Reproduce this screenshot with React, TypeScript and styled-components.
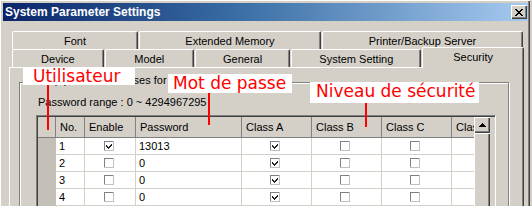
import React from 'react'
import styled, { createGlobalStyle } from 'styled-components'

const FACE = '#d4d0c8'
const SHADOW = '#808080'
const DARK = '#404040'
const GRID = '#d4d0c8'
const ROW_HEAD = '#c4c0b8'
const UI_FONT = '"Liberation Sans", Arial, sans-serif'
const NOTE_FONT = '"DejaVu Sans", Verdana, sans-serif'

const GlobalStyle = createGlobalStyle`
  html, body {
    margin: 0;
    padding: 0;
    background: ${FACE};
  }
  body {
    width: 532px;
    height: 206px;
    overflow: hidden;
    font-family: ${UI_FONT};
    font-size: 11px;
    color: #000;
  }
`

const Window = styled.div`
  position: relative;
  box-sizing: border-box;
  width: 530px;
  height: 206px;
  overflow: hidden;
  padding: 3px 2px 0 3px;
  background: ${FACE};
  box-shadow: inset 1px 1px 0 #fff, inset -1px 0 0 ${DARK},
    inset -2px 0 0 ${SHADOW};
`

const TitleBar = styled.div`
  display: flex;
  align-items: center;
  justify-content: space-between;
  height: 18px;
  padding: 0 1px 0 2px;
  background: linear-gradient(90deg, #0a246a 0%, #3a6ea5 45%, #a6caf0 100%);
`

const TitleText = styled.span`
  color: #fff;
  font-weight: bold;
  font-size: 12px;
  white-space: nowrap;
`

const CloseButton = styled.div`
  box-sizing: border-box;
  width: 16px;
  height: 14px;
  display: flex;
  align-items: center;
  justify-content: center;
  background: ${FACE};
  box-shadow: inset 1px 1px 0 #fff, inset -1px -1px 0 ${DARK},
    inset -2px -2px 0 ${SHADOW};
`

const Body = styled.div`
  padding: 10px 4px 0 6px;
`

const TabRow = styled.div`
  display: flex;
  align-items: flex-end;
  gap: 1px;
  height: 18px;
  padding-left: 3px;
`

const Tab = styled.div<{ $w: number; $active?: boolean }>`
  position: relative;
  z-index: ${(p) => (p.$active ? 2 : 1)};
  box-sizing: border-box;
  width: ${(p) => p.$w}px;
  height: ${(p) => (p.$active ? 21 : 18)}px;
  margin-bottom: ${(p) => (p.$active ? -1 : 0)}px;
  padding-bottom: ${(p) => (p.$active ? 3 : 0)}px;
  display: flex;
  align-items: center;
  justify-content: center;
  background: ${FACE};
  border-top: 1px solid #fff;
  border-left: 1px solid #fff;
  border-right: 1px solid ${DARK};
  box-shadow: inset -1px 0 0 ${SHADOW};
  border-radius: 2px 2px 0 0;
  white-space: nowrap;
`

const Panel = styled.div`
  box-sizing: border-box;
  height: 160px;
  padding: 14px 14px 0 9px;
  border-top: 1px solid #fff;
  border-left: 1px solid #fff;
  border-right: 1px solid ${DARK};
  box-shadow: inset -1px 0 0 ${SHADOW};
`

const GroupBox = styled.div`
  height: 150px;
  padding: 0 16px;
  border: 1px solid ${SHADOW};
  box-shadow: inset 1px 1px 0 #fff, 1px 1px 0 #fff;
`

const Caption = styled.div`
  width: fit-content;
  margin: -9px 0 0 -9px;
  padding: 0 2px;
  line-height: 13px;
  background: ${FACE};
  white-space: nowrap;
`

const RangeText = styled.div`
  margin: 9px 0 0 2px;
  line-height: 13px;
`

const TableFrame = styled.div`
  display: flex;
  width: 456px;
  height: 100px;
  margin-top: 6px;
  border-top: 1px solid ${SHADOW};
  border-left: 1px solid ${SHADOW};
  border-right: 1px solid #fff;
  box-shadow: inset 1px 1px 0 ${DARK}, inset -1px 0 0 ${FACE};
  padding: 1px 1px 0 1px;
`

const Grid = styled.div`
  display: grid;
  width: 436px;
  overflow: hidden;
  grid-template-columns: 18px 29px 51px 106px 70px 70px 70px 70px;
  grid-template-rows: 21px;
  grid-auto-rows: 17px;
  align-content: start;
`

const HeadCell = styled.div`
  box-sizing: border-box;
  display: flex;
  align-items: center;
  padding-left: 4px;
  background: ${FACE};
  border-right: 1px solid ${SHADOW};
  border-bottom: 1px solid ${SHADOW};
  white-space: nowrap;
  overflow: hidden;
`

const RowHead = styled.div`
  background: ${ROW_HEAD};
`

const Cell = styled.div<{ $center?: boolean }>`
  box-sizing: border-box;
  display: flex;
  align-items: center;
  justify-content: ${(p) => (p.$center ? 'center' : 'flex-start')};
  padding: ${(p) => (p.$center ? '0 3px 0 0' : '0 0 0 3px')};
  background: #fff;
  border-right: 1px solid ${GRID};
  border-bottom: 1px solid ${GRID};
`

const ScrollBar = styled.div`
  display: flex;
  flex-direction: column;
  width: 16px;
`

const raised = `
  box-sizing: border-box;
  background: ${FACE};
  box-shadow: inset 1px 1px 0 #fff, inset -1px -1px 0 ${DARK},
    inset -2px -2px 0 ${SHADOW};
`

const ScrollButton = styled.div`
  ${raised}
  height: 16px;
  display: flex;
  align-items: center;
  justify-content: center;
`

const ScrollThumb = styled.div`
  ${raised}
  flex: 1;
`

const Annotation = styled.div<{ $x: number; $y: number }>`
  position: absolute;
  left: ${(p) => p.$x}px;
  top: ${(p) => p.$y}px;
  z-index: 10;
  display: flex;
  flex-direction: column;
`

const NoteLabel = styled.div<{ $w: number; $h: number; $pad: number }>`
  box-sizing: border-box;
  width: ${(p) => p.$w}px;
  height: ${(p) => p.$h}px;
  padding-left: ${(p) => p.$pad}px;
  background: #fff;
  color: #ff0000;
  font-family: ${NOTE_FONT};
  font-size: 17px;
  line-height: 18px;
  white-space: nowrap;
  overflow: hidden;
`

const NotePointer = styled.div<{ $offset: number; $len: number }>`
  width: 2px;
  height: ${(p) => p.$len}px;
  margin-left: ${(p) => p.$offset}px;
  background: #ff0000;
`

const CheckBox = ({ checked }: { checked: boolean }) => (
  <svg width="10" height="10" viewBox="0 0 10 10" shapeRendering="crispEdges">
    <rect x="0" y="0" width="10" height="10" fill="#c0c0c0" />
    <rect x="0" y="0" width="9" height="9" fill="#808080" />
    <rect x="1" y="1" width="8" height="8" fill="#fff" />
    {checked && (
      <path
        d="M2 4h1v1h1v1h1V5h1V4h1V3h1v2H7v1H6v1H5v1H4V7H3V6H2z"
        fill="#202020"
      />
    )}
  </svg>
)

const rows = [
  { no: 1, enable: true, password: '13013', a: true, b: false, c: false },
  { no: 2, enable: false, password: '0', a: true, b: false, c: false },
  { no: 3, enable: false, password: '0', a: true, b: false, c: false },
  { no: 4, enable: false, password: '0', a: true, b: false, c: false },
]

const columns = ['', 'No.', 'Enable', 'Password', 'Class A', 'Class B', 'Class C', 'Class D']

export default function App() {
  return (
    <>
      <GlobalStyle />
      <Window>
        <TitleBar>
          <TitleText>System Parameter Settings</TitleText>
          <CloseButton>
            <svg width="8" height="7" viewBox="0 0 8 7" shapeRendering="crispEdges">
              <path
                d="M0 0h2v1h1v1h2V1h1V0h2v1H7v1H6v1H5v1h1v1h1v1h1v1H6V6H5V5H3v1H2v1H0V6h1V5h1V4h1V3H2V2H1V1H0z"
                fill="#000"
              />
            </svg>
          </CloseButton>
        </TitleBar>
        <Body>
          <TabRow>
            <Tab $w={126}>Font</Tab>
            <Tab $w={182}>Extended Memory</Tab>
            <Tab $w={201}>Printer/Backup Server</Tab>
          </TabRow>
          <TabRow>
            <Tab $w={92}>Device</Tab>
            <Tab $w={89}>Model</Tab>
            <Tab $w={96}>General</Tab>
            <Tab $w={130}>System Setting</Tab>
            <Tab $w={102} $active>
              Security
            </Tab>
          </TabRow>
          <Panel>
            <GroupBox>
              <Caption>Set up password classes for users</Caption>
              <RangeText>Password range : 0 ~ 4294967295</RangeText>
              <TableFrame>
                <Grid>
                  {columns.map((c, i) => (
                    <HeadCell key={i}>{c}</HeadCell>
                  ))}
                  {rows.map((r) => (
                    <React.Fragment key={r.no}>
                      <RowHead />
                      <Cell>{r.no}</Cell>
                      <Cell $center>
                        <CheckBox checked={r.enable} />
                      </Cell>
                      <Cell>{r.password}</Cell>
                      <Cell $center>
                        <CheckBox checked={r.a} />
                      </Cell>
                      <Cell $center>
                        <CheckBox checked={r.b} />
                      </Cell>
                      <Cell $center>
                        <CheckBox checked={r.c} />
                      </Cell>
                      <Cell $center />
                    </React.Fragment>
                  ))}
                </Grid>
                <ScrollBar>
                  <ScrollButton>
                    <svg width="7" height="4" viewBox="0 0 7 4" shapeRendering="crispEdges">
                      <path d="M3 0h1v1h1v1h1v1h1v1H0V3h1V2h1V1h1z" fill="#000" />
                    </svg>
                  </ScrollButton>
                  <ScrollThumb />
                </ScrollBar>
              </TableFrame>
            </GroupBox>
          </Panel>
        </Body>

        <Annotation $x={23} $y={67}>
          <NoteLabel $w={112} $h={18} $pad={10}>
            Utilisateur
          </NoteLabel>
          <NotePointer $offset={24} $len={45} />
        </Annotation>
        <Annotation $x={168} $y={74}>
          <NoteLabel $w={124} $h={19} $pad={5}>
            Mot de passe
          </NoteLabel>
          <NotePointer $offset={40} $len={32} />
        </Annotation>
        <Annotation $x={310} $y={82}>
          <NoteLabel $w={169} $h={21} $pad={6}>
            Niveau de sécurité
          </NoteLabel>
          <NotePointer $offset={55} $len={24} />
        </Annotation>
      </Window>
    </>
  )
}
